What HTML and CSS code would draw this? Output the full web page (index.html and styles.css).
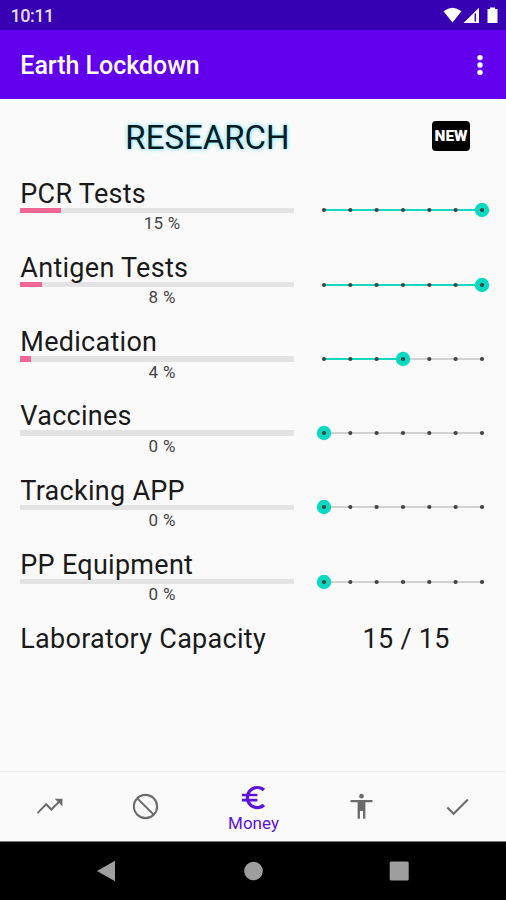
FILE: index.html
```html
<!DOCTYPE html>
<html lang="en">
<head>
<meta charset="utf-8">
<title>Earth Lockdown</title>
<link rel="stylesheet" href="styles.css">
</head>
<body>
<svg class="defs" aria-hidden="true">
  <defs>
    <g id="ticks" fill="#424242">
      <circle cx="14" cy="10" r="2.1"/><circle cx="40.3" cy="10" r="2.1"/><circle cx="66.6" cy="10" r="2.1"/><circle cx="93" cy="10" r="2.1"/><circle cx="119.3" cy="10" r="2.1"/><circle cx="145.6" cy="10" r="2.1"/><circle cx="172" cy="10" r="2.1"/>
    </g>
  </defs>
</svg>
<div class="screen">
  <header class="status">
    <span class="clock">10:11</span>
    <svg class="signals" width="56" height="18" viewBox="0 0 56 18" fill="#fff">
      <path d="M0.5 4.2Q9.5-2.8 18.5 4.2L9.5 15.6Z"/>
      <path d="M20.5 16L36 .8V16Z"/>
      <path d="M32.3 6.4V14.5" stroke="#3700b3" stroke-width="1.5"/>
      <path d="M44.5 2H47V.5h5V2h2.5v14h-10Z"/>
    </svg>
  </header>
  <div class="appbar">
    <h1>Earth Lockdown</h1>
    <svg width="8" height="22" viewBox="0 0 8 22" fill="#fff"><circle cx="4" cy="3.6" r="2.7"/><circle cx="4" cy="11" r="2.7"/><circle cx="4" cy="18.4" r="2.7"/></svg>
  </div>
  <main>
    <div class="heading">
      <h2>RESEARCH</h2>
      <span class="new">NEW</span>
    </div>
    <section class="row">
      <div class="item"><div class="name">PCR Tests</div><div class="bar"><div class="fill" style="width:15%"></div></div><div class="pct">15 %</div></div>
      <svg class="slider" viewBox="0 0 186 20"><path class="on" d="M14 10H172"/><circle class="thumb" cx="172" cy="10" r="7.2"/><use href="#ticks"/></svg>
    </section>
    <section class="row">
      <div class="item"><div class="name">Antigen Tests</div><div class="bar"><div class="fill" style="width:8%"></div></div><div class="pct">8 %</div></div>
      <svg class="slider" viewBox="0 0 186 20"><path class="on" d="M14 10H172"/><circle class="thumb" cx="172" cy="10" r="7.2"/><use href="#ticks"/></svg>
    </section>
    <section class="row">
      <div class="item"><div class="name">Medication</div><div class="bar"><div class="fill" style="width:4%"></div></div><div class="pct">4 %</div></div>
      <svg class="slider" viewBox="0 0 186 20"><path class="off" d="M93 10H172"/><path class="on" d="M14 10H93"/><circle class="thumb" cx="93" cy="10" r="7.2"/><use href="#ticks"/></svg>
    </section>
    <section class="row">
      <div class="item"><div class="name">Vaccines</div><div class="bar"></div><div class="pct">0 %</div></div>
      <svg class="slider" viewBox="0 0 186 20"><path class="off" d="M14 10H172"/><circle class="thumb" cx="14" cy="10" r="7.2"/><use href="#ticks"/></svg>
    </section>
    <section class="row">
      <div class="item"><div class="name">Tracking APP</div><div class="bar"></div><div class="pct">0 %</div></div>
      <svg class="slider" viewBox="0 0 186 20"><path class="off" d="M14 10H172"/><circle class="thumb" cx="14" cy="10" r="7.2"/><use href="#ticks"/></svg>
    </section>
    <section class="row">
      <div class="item"><div class="name">PP Equipment</div><div class="bar"></div><div class="pct">0 %</div></div>
      <svg class="slider" viewBox="0 0 186 20"><path class="off" d="M14 10H172"/><circle class="thumb" cx="14" cy="10" r="7.2"/><use href="#ticks"/></svg>
    </section>
    <section class="row">
      <div class="item"><div class="name">Laboratory Capacity</div></div>
      <div class="total">15 / 15</div>
    </section>
  </main>
  <nav class="tabs">
    <a><svg width="31" height="31" viewBox="0 0 24 24" fill="#6b6b6b"><path d="M16 6l2.29 2.29-4.88 4.88-4-4L2.2 16.7 3.2 17.7l6.2-6.3 4 4 6.1-6.1L22 12V6z"/></svg></a>
    <a><svg width="31" height="31" viewBox="0 0 24 24" fill="none" stroke="#6b6b6b" stroke-width="1.6"><circle cx="12" cy="12" r="9"/><path d="M5.7 5.7L18.3 18.3"/></svg></a>
    <a class="active"><svg width="31" height="31" viewBox="0 0 24 24" fill="currentColor"><path d="M15 18.5c-2.51 0-4.68-1.42-5.76-3.5H15v-2H8.58c-.05-.33-.08-.66-.08-1s.03-.67.08-1H15V9H9.24C10.32 6.92 12.5 5.5 15 5.5c1.61 0 3.09.59 4.23 1.57L21 5.3C19.41 3.87 17.3 3 15 3c-3.92 0-7.24 2.51-8.48 6H3v2h3.06c-.04.33-.06.66-.06 1s.02.67.06 1H3v2h3.52c1.24 3.49 4.56 6 8.48 6 2.31 0 4.41-.87 6-2.3l-1.78-1.77c-1.13.98-2.6 1.57-4.22 1.57z"/></svg><span>Money</span></a>
    <a><svg width="31" height="31" viewBox="0 0 24 24" fill="#6b6b6b"><circle cx="12" cy="4" r="1.8"/><path d="M20.5 8.7H15v12.8h-1.8v-6h-2.4v6H9V8.7H3.5V7h17z"/></svg></a>
    <a><svg width="31" height="31" viewBox="0 0 24 24" fill="#6b6b6b"><path d="M9 16.5L4.7 12.2l-1.1 1.1L9 18.7 20.6 7.1l-1.1-1.1z"/></svg></a>
  </nav>
  <footer class="system">
    <svg width="20" height="22" viewBox="0 0 20 22"><path d="M0 11L18 .8V21.2Z"/></svg>
    <svg width="20" height="22" viewBox="0 0 20 22"><circle cx="10.5" cy="11" r="9.3"/></svg>
    <svg width="20" height="22" viewBox="0 0 20 22"><rect x=".7" y="1.5" width="19" height="19" rx="1.5"/></svg>
  </footer>
</div>
</body>
</html>
```
FILE: styles.css
```css
* { box-sizing: border-box; }
body { margin: 0; font-family: Roboto, sans-serif; color: #1a1a1a; background: #fafafa; }
svg { display: block; flex: none; }
.defs { position: absolute; width: 0; height: 0; }
.screen { width: 506px; height: 900px; display: flex; flex-direction: column; overflow: hidden; }
.status { height: 30px; background: #3700b3; display: flex; justify-content: space-between; align-items: center; padding: 1px 7px 0 10px; }
.clock { color: #e6dcf6; font-size: 18px; line-height: 20px; letter-spacing: -.5px; font-weight: 500; padding-left: .5px; }
.appbar { height: 69px; background: #6200ee; display: flex; justify-content: space-between; align-items: center; padding: 0 22.5px 0 20.3px; }
h1 { margin: 0; color: #fff; font-size: 25px; line-height: 34px; font-weight: 500; padding-top: 3px; letter-spacing: -.03px; }
main { flex: 1; padding: 0 11.5px 0 20.3px; }
.heading { height: 74.6px; display: flex; align-items: center; padding-left: 105px; }
h2 { margin: 0; width: 307px; font-size: 33px; line-height: 40px; font-weight: 400; color: #071a22; text-shadow: 0 0 4px #55dfff; padding-top: 3px; }
.new { width: 37.5px; height: 30px; border-radius: 4px; background: #000; color: #fff; display: flex; align-items: center; justify-content: center; font-size: 15.5px; line-height: 30px; font-weight: 900; }
.row { height: 74.25px; display: flex; gap: 16px; }
.item { width: 273.7px; flex: none; }
.name { height: 34px; font-size: 27px; line-height: 41px; white-space: nowrap; letter-spacing: .28px; }
.bar { height: 5.5px; background: #e3e3e3; }
.fill { height: 100%; background: #f06795; }
.pct { margin-left: 10px; text-align: center; font-size: 17px; line-height: 20px; color: #444; letter-spacing: .3px; }
.slider { width: 186px; height: 20px; margin-top: 26.7px; }
.on { stroke: #15d8bd; stroke-width: 2; }
.off { stroke: #d2d2d2; stroke-width: 2; }
.thumb { fill: #08d9c1; }
.total { font-size: 27px; line-height: 41px; letter-spacing: .3px; padding-left: 52.5px; }
.tabs { height: 71px; border-top: 1px solid #eee; border-bottom: 1px solid #777; display: flex; padding: 0 0 0 1px; }
.tabs a { width: 97px; display: flex; flex-direction: column; align-items: center; justify-content: center; }
.tabs .active { width: 119px; color: #5b13dc; padding-top: 1px; }
.active span { font-size: 17px; line-height: 20px; }
.system { height: 58px; background: #000; display: flex; justify-content: center; gap: 126px; align-items: center; fill: #9e9e9e; }
```
